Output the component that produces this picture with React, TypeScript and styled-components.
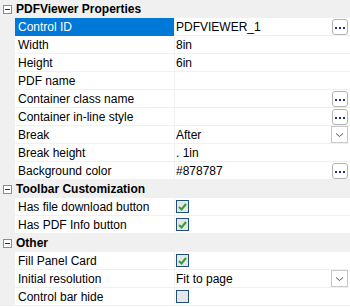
import React from 'react';
import styled, { createGlobalStyle, css } from 'styled-components';

const GlobalStyle = createGlobalStyle`
    html, body {
        margin: 0;
        padding: 0;
        background: #ffffff;
    }
    body {
        font-family: "Liberation Sans", Arial, sans-serif;
        font-size: 12px;
        color: #000000;
    }
`;

const Grid = styled.div`
    width: 350px;
    background-color: #f0f0f0;
`;

const Header = styled.div`
    display: flex;
    align-items: center;
    height: 18px;
    background-color: #f0f0f0;
    font-weight: bold;
    font-size: 12px;
`;

const Toggle = styled.span`
    position: relative;
    box-sizing: border-box;
    width: 9px;
    height: 9px;
    margin: 0 4px 0 3px;
    border: 1px solid #8c8c8c;
    background: #ffffff;

    &::after {
        content: '';
        position: absolute;
        left: 1px;
        top: 3px;
        width: 5px;
        height: 1px;
        background: #333333;
    }
`;

const Row = styled.div`
    display: grid;
    grid-template-columns: 15px 159px 1px 1fr;
    height: 18px;
`;

const Gutter = styled.div`
    background-color: #f0f0f0;
`;

const Label = styled.div<{ selected?: boolean }>`
    display: flex;
    align-items: center;
    padding-left: 3px;
    background-color: #ffffff;
    border-bottom: 1px solid #f0f0f0;
    white-space: nowrap;
    overflow: hidden;

    ${props => props.selected && css`
        background-color: #0078d7;
        color: #ffffff;
        border-bottom-color: #0078d7;
    `}
`;

const Divider = styled.div`
    background-color: #f0f0f0;
`;

const Value = styled.div`
    display: flex;
    align-items: center;
    justify-content: space-between;
    padding-left: 1px;
    padding-right: 2px;
    background-color: #ffffff;
    border-bottom: 1px solid #f0f0f0;
    white-space: nowrap;
`;

const SideButton = styled.span`
    display: flex;
    align-items: center;
    justify-content: center;
    gap: 2px;
    box-sizing: border-box;
    width: 16px;
    height: 16px;
    padding-top: 3px;
    border: 1px solid #b4b4b4;
    border-radius: 3px;
    background: #ffffff;
`;

const Dot = styled.i`
    display: block;
    width: 2px;
    height: 2px;
    background: #1e2a8c;
`;

const DropButton = styled.span`
    display: flex;
    align-items: center;
    justify-content: center;
    box-sizing: border-box;
    width: 17px;
    height: 17px;
    border: 1px solid #c8c8c8;
    background: #ffffff;
`;

const Check = styled.span`
    display: flex;
    align-items: center;
    justify-content: center;
    box-sizing: border-box;
    width: 13px;
    height: 13px;
    border: 1px solid #1f4f7a;
    background: #e6e6e6;
`;

type Kind = 'text' | 'more' | 'drop' | 'check';

type Prop = {
    label: string;
    value?: string;
    kind?: Kind;
    checked?: boolean;
    selected?: boolean;
};

type Section = {
    title: string;
    props: Prop[];
};

const sections: Section[] = [
    {
        title: 'PDFViewer Properties',
        props: [
            { label: 'Control ID', value: 'PDFVIEWER_1', kind: 'more', selected: true },
            { label: 'Width', value: '8in' },
            { label: 'Height', value: '6in' },
            { label: 'PDF name', value: '' },
            { label: 'Container class name', value: '', kind: 'more' },
            { label: 'Container in-line style', value: '', kind: 'more' },
            { label: 'Break', value: 'After', kind: 'drop' },
            { label: 'Break height', value: '. 1in' },
            { label: 'Background color', value: '#878787', kind: 'more' },
        ],
    },
    {
        title: 'Toolbar Customization',
        props: [
            { label: 'Has file download button', kind: 'check', checked: true },
            { label: 'Has PDF Info button', kind: 'check', checked: true },
        ],
    },
    {
        title: 'Other',
        props: [
            { label: 'Fill Panel Card', kind: 'check', checked: true },
            { label: 'Initial resolution', value: 'Fit to page', kind: 'drop' },
            { label: 'Control bar hide', kind: 'check', checked: false },
        ],
    },
];

const Tick = () => (
    <svg width="9" height="8" viewBox="0 0 9 8">
        <path d="M1 4 L3.5 6.5 L8 1" fill="none" stroke="#2fa12f" strokeWidth="2" />
    </svg>
);

const Chevron = () => (
    <svg width="9" height="6" viewBox="0 0 9 6">
        <path d="M1 1.5 L4.5 4.5 L8 1.5" fill="none" stroke="#555555" strokeWidth="1" />
    </svg>
);

const PropRow = ({ p }: { p: Prop }) => (
    <Row>
        <Gutter />
        <Label selected={p.selected}>{p.label}</Label>
        <Divider />
        <Value>
            {p.kind === 'check' ? (
                <Check>{p.checked && <Tick />}</Check>
            ) : (
                <span>{p.value}</span>
            )}
            {p.kind === 'more' && <SideButton><Dot /><Dot /><Dot /></SideButton>}
            {p.kind === 'drop' && <DropButton><Chevron /></DropButton>}
        </Value>
    </Row>
);

export default function App() {
    return (
        <>
            <GlobalStyle />
            <Grid>
                {sections.map(s => (
                    <div key={s.title}>
                        <Header>
                            <Toggle />
                            {s.title}
                        </Header>
                        {s.props.map(p => <PropRow key={p.label} p={p} />)}
                    </div>
                ))}
            </Grid>
        </>
    );
}
